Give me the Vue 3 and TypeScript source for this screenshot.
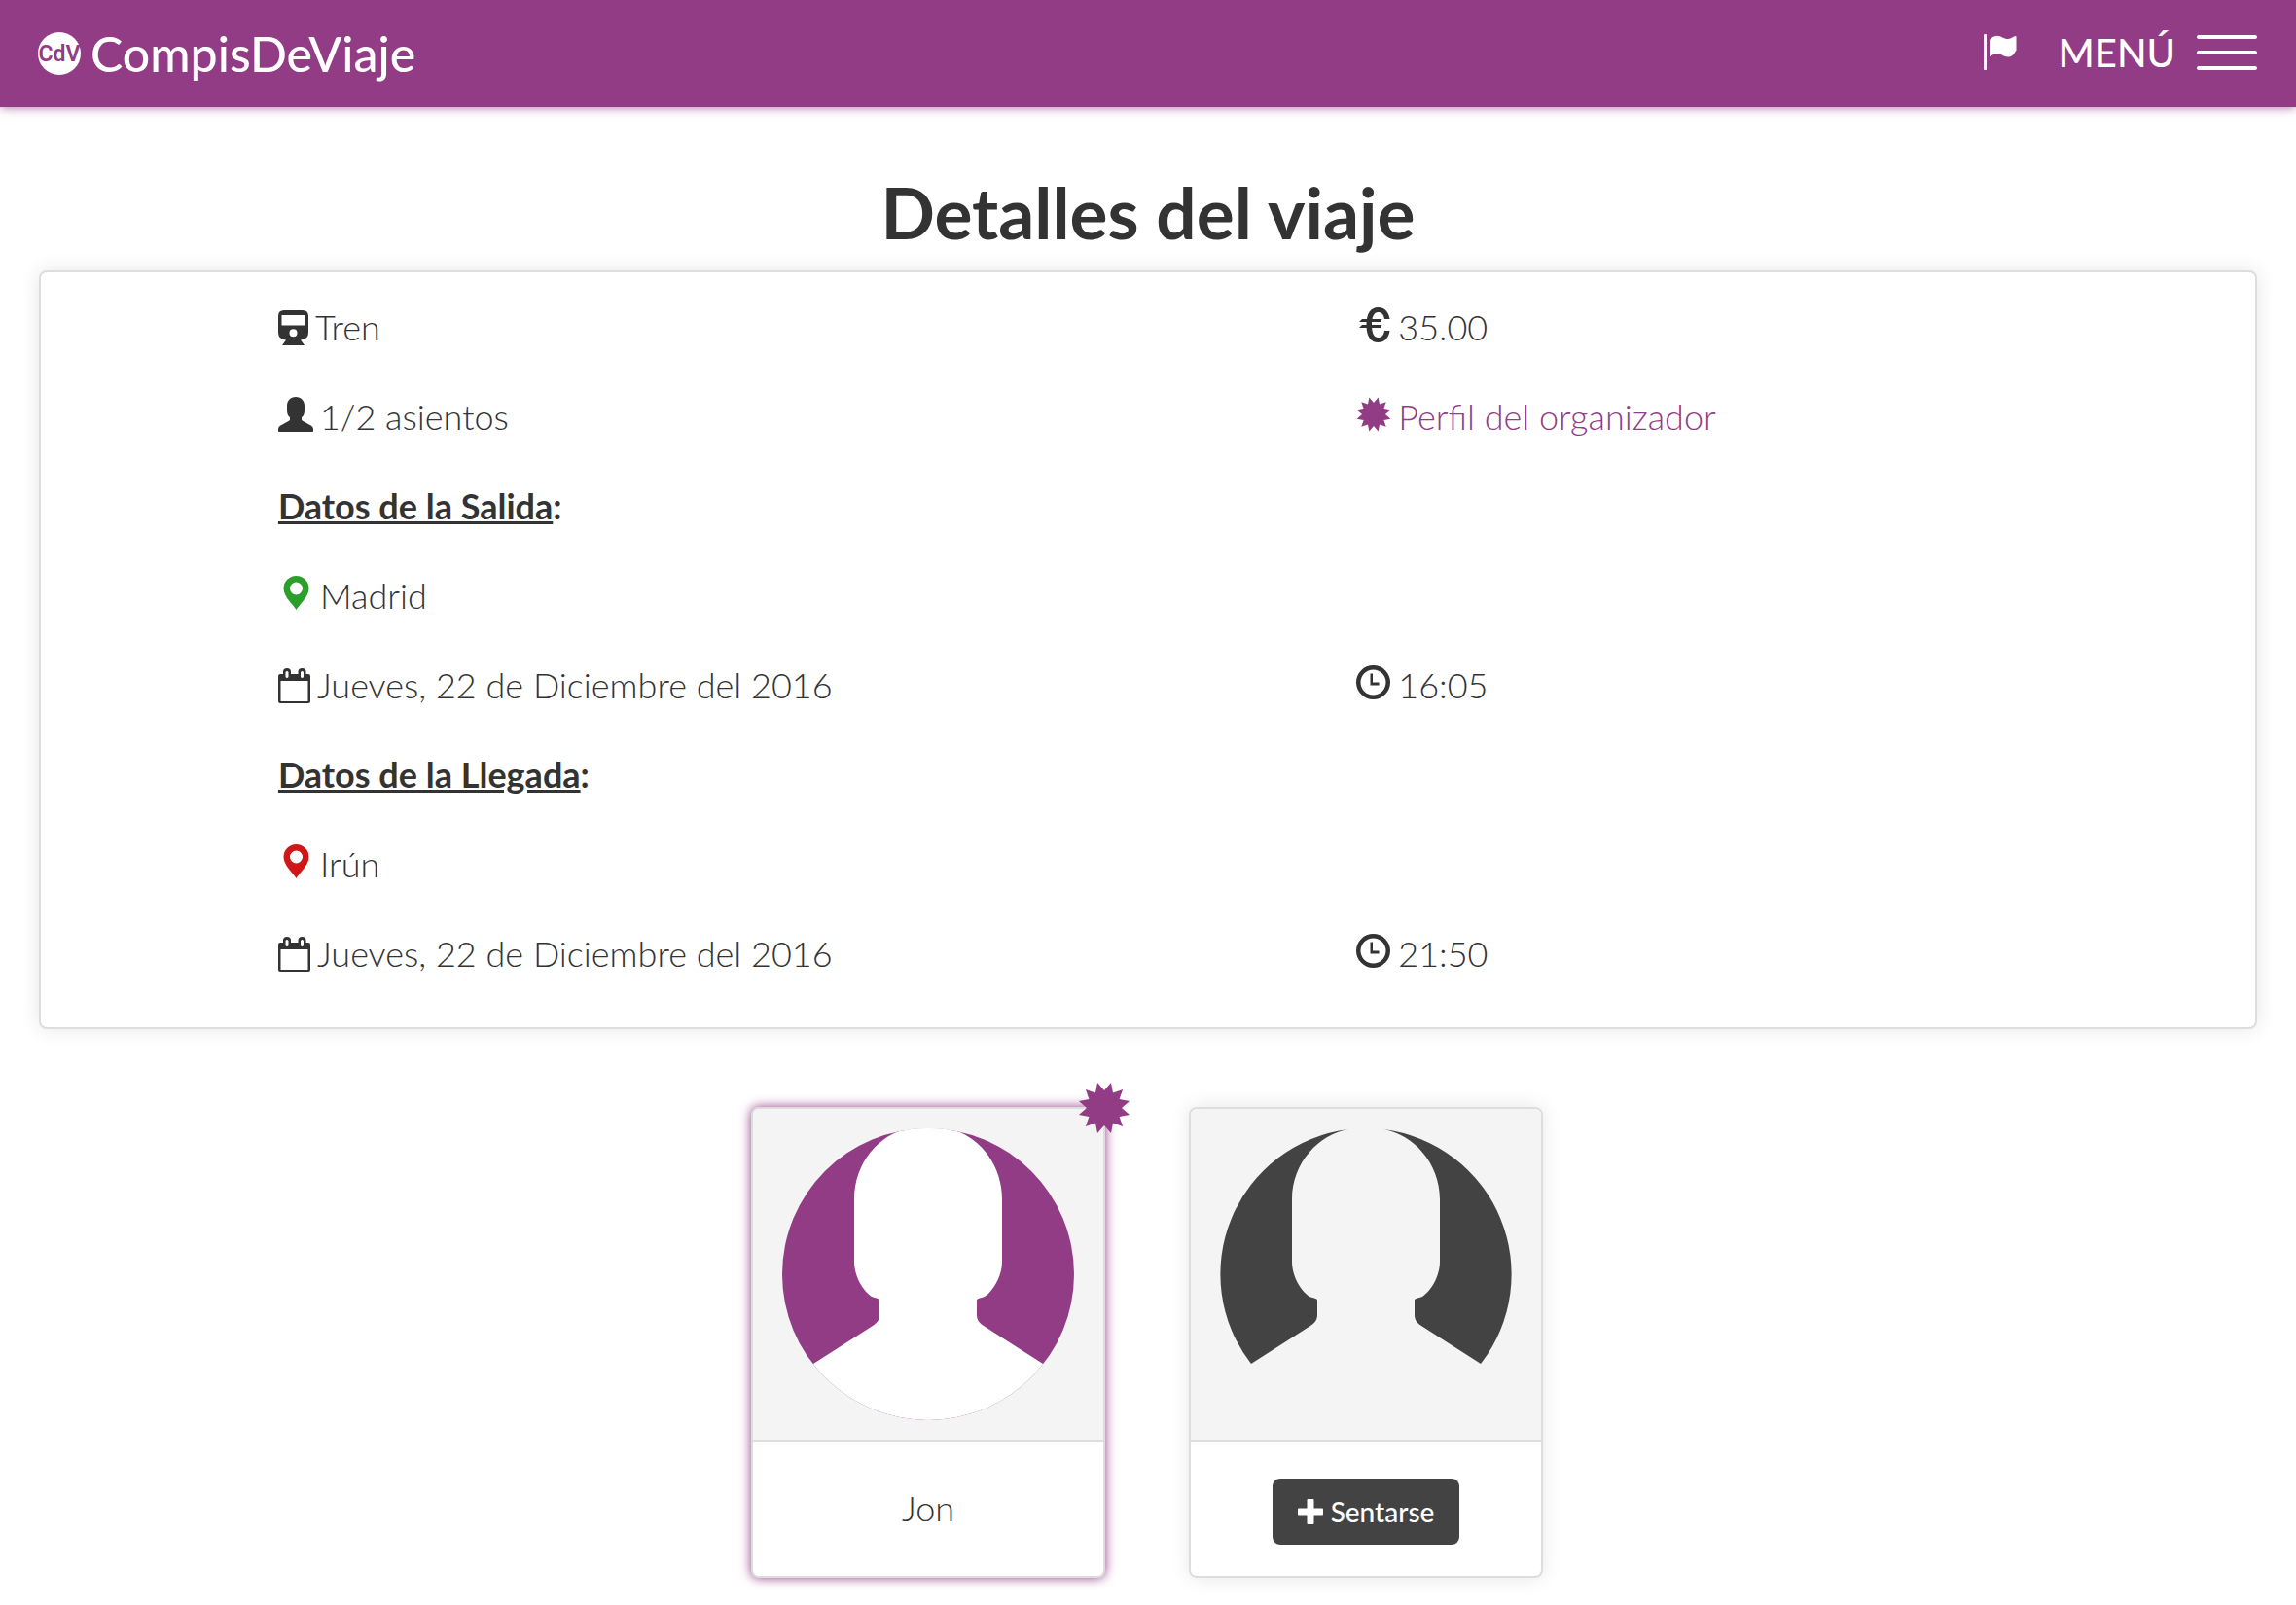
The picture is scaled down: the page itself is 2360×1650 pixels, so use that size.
<script setup lang="ts">
type IconName = 'train' | 'user' | 'euro' | 'certificate' | 'pin' | 'calendar' | 'clock'

interface Detail {
  icon: IconName
  text: string
  tone?: 'start' | 'end'
  href?: string
}

interface Row {
  heading?: string
  items: Detail[]
}

interface Seat {
  id: number
  name?: string
  organizer: boolean
}

const rows: Row[] = [
  { items: [{ icon: 'train', text: 'Tren' }, { icon: 'euro', text: '35.00' }] },
  {
    items: [
      { icon: 'user', text: '1/2 asientos' },
      { icon: 'certificate', text: 'Perfil del organizador', href: '#organizador' },
    ],
  },
  { heading: 'Datos de la Salida', items: [] },
  { items: [{ icon: 'pin', text: 'Madrid', tone: 'start' }] },
  {
    items: [
      { icon: 'calendar', text: 'Jueves, 22 de Diciembre del 2016' },
      { icon: 'clock', text: '16:05' },
    ],
  },
  { heading: 'Datos de la Llegada', items: [] },
  { items: [{ icon: 'pin', text: 'Irún', tone: 'end' }] },
  {
    items: [
      { icon: 'calendar', text: 'Jueves, 22 de Diciembre del 2016' },
      { icon: 'clock', text: '21:50' },
    ],
  },
]

const seats: Seat[] = [
  { id: 1, name: 'Jon', organizer: true },
  { id: 2, organizer: false },
]

// Each icon is 36 units high; only the train and the calendar are narrower.
const iconWidth = (name: IconName): number =>
  name === 'train' ? 31 : name === 'calendar' ? 33 : 36

const iconPaths: Record<IconName, string> = {
  train:
    'M6 0H25Q31 0 31 6V23Q31 30 23 30.500L27 36H4L8 30.500Q0 30 0 23V6Q0 0 6 0ZM3.500 5V15.500H27.500V5ZM15.500 19.300A4 4 0 1 0 15.500 27.300A4 4 0 1 0 15.500 19.300Z',
  user:
    'M18 0C23.500 0 27 4 27 9V14C27 17 26 20 24 21V23C24 24 24.500 24.500 25.500 25L34 29.800Q36 31 36 33V35Q36 36 35 36H1Q0 36 0 35V33Q0 31 2 29.800L10.500 25C11.500 24.500 12 24 12 23V21C10 20 9 17 9 14V9C9 4 12.500 0 18 0Z',
  euro:
    'M34.500 12H29C28.500 7.500 26 5 22.500 5C18.500 5 16 9 16 18S18.500 31 22.500 31C26 31 28.500 28.500 29 24H34.500C33.500 31.500 29 36 22.500 36C15 36 10.500 30 10.500 18S15 0 22.500 0C29 0 33.500 4.500 34.500 12ZM6 12V12H26.500L25 15H3ZM6 18H26.500L25 21H3Z',
  certificate: starPath(18, 18, 18, 12),
  pin:
    'M18.500 35C14.500 28.500 5.500 21.500 5.500 13A13 13 0 0 1 31.500 13C31.500 21.500 22.500 28.500 18.500 35ZM18.500 6.500A6.500 6.500 0 1 0 18.500 19.500A6.500 6.500 0 1 0 18.500 6.500Z',
  calendar:
    'M2 6H5V3.500A4 3.500 0 0 1 13 3.500V6H20.500V3.500A4 3.500 0 0 1 28.500 3.500V6H31Q33 6 33 8V34Q33 36 31 36H2Q0 36 0 34V8Q0 6 2 6ZM2.500 13V34H30.500V13ZM7.500 4V9Q9 11 10.500 9V4Q9 2 7.500 4ZM23 4V9Q24.500 11 26 9V4Q24.500 2 23 4Z',
  clock:
    'M17.500 0A17.500 17.500 0 1 1 17.500 35A17.500 17.500 0 1 1 17.500 0ZM17.500 4.500A13 13 0 1 0 17.500 30.500A13 13 0 1 0 17.500 4.500ZM14.500 8.500H17V17.500H23.500V20.500H14.500Z',
}

function starPath(cx: number, cy: number, outer: number, inner: number): string {
  const points: string[] = []
  for (let i = 0; i < 24; i++) {
    const radius = i % 2 === 0 ? inner : outer
    const angle = (i * Math.PI) / 12
    points.push(
      `${(cx + radius * Math.sin(angle)).toFixed(2)} ${(cy - radius * Math.cos(angle)).toFixed(2)}`,
    )
  }
  return `M${points.join('L')}Z`
}

const badgePath = starPath(27, 27, 27, 18)
</script>

<template>
  <header class="navbar">
    <a class="brand" href="#inicio">
      <svg class="logo" viewBox="0 0 44 44" aria-hidden="true">
        <circle cx="22" cy="22" r="22" fill="#fff" />
        <text x="22" y="30" text-anchor="middle" class="logo-text">CdV</text>
      </svg>
      <span>CompisDeViaje</span>
    </a>
    <nav class="nav-actions">
      <a class="flag" href="#avisos" aria-label="Avisos">
        <svg viewBox="0 0 36 38" aria-hidden="true">
          <rect x="1" y="0" width="3" height="37" rx="1" />
          <path d="M7 6Q10 2 14.500 1.700C19 1.700 21.500 5 26 5C29.500 5 31.500 2 34 2Q34.500 2 34.500 3V16.500C32 21 30 23.500 26 23.500C21.500 23.500 19 20 14.500 20C11 20 10 22 7.500 23Q7 23 7 22.500Z" />
        </svg>
      </a>
      <button class="menu" type="button">
        <span>MENÚ</span>
        <span class="bars" aria-hidden="true"><i></i><i></i><i></i></span>
      </button>
    </nav>
  </header>

  <main class="page">
    <h1>Detalles del viaje</h1>

    <section class="panel">
      <div v-for="(row, r) in rows" :key="r" class="row">
        <h2 v-if="row.heading"><u>{{ row.heading }}</u>:</h2>
        <component
          :is="item.href ? 'a' : 'p'"
          v-for="item in row.items"
          :key="item.text"
          :href="item.href"
          class="detail"
        >
          <svg
            class="icon"
            :class="[item.icon, item.tone]"
            :width="iconWidth(item.icon)"
            height="36"
            :viewBox="`0 0 ${iconWidth(item.icon)} 36`"
            aria-hidden="true"
          >
            <path :d="iconPaths[item.icon]" :fill-rule="item.icon === 'euro' ? 'nonzero' : 'evenodd'" />
          </svg>{{ item.text }}
        </component>
      </div>
    </section>

    <section class="seats">
      <article v-for="seat in seats" :key="seat.id" class="seat" :class="{ organizer: seat.organizer }">
        <div class="photo">
          <svg class="avatar" viewBox="0 0 300 300" aria-hidden="true">
            <path
              v-if="!seat.organizer"
              class="shade"
              d="M32 242A150 150 0 0 1 132 1C102 6 74 35 74 73V137C74 152 83 167 92 173C96 175 100 174 100 177V192C100 196 98 200 93 203ZM268 242A150 150 0 0 0 168 1C198 6 226 35 226 73V137C226 152 217 167 208 173C204 175 200 174 200 177V192C200 196 202 200 207 203Z"
            />
            <template v-else>
              <clipPath :id="`round-${seat.id}`"><circle cx="150" cy="150" r="150" /></clipPath>
              <circle class="shade" cx="150" cy="150" r="150" />
              <path
                fill="#fff"
                :clip-path="`url(#round-${seat.id})`"
                d="M74 73C74 35 100 6 130 0H170C200 6 226 35 226 73V137C226 152 217 167 208 173C204 175 200 174 200 177V192C200 196 202 200 207 203L268 242L300 262V300H0V262L32 242L93 203C98 200 100 196 100 192V177C100 174 96 175 92 173C83 167 74 152 74 137Z"
              />
              <path fill="#fff" d="M126 2Q138 0 150 0T174 2V6H126Z" />
            </template>
          </svg>
        </div>
        <p v-if="seat.name" class="name">{{ seat.name }}</p>
        <div v-else class="action">
          <button class="sit" type="button">
            <svg width="26" height="26" viewBox="0 0 26 26" aria-hidden="true">
              <path d="M10.500 0H15.500Q16.500 0 16.500 1V9.500H25Q26 9.500 26 10.500V15.500Q26 16.500 25 16.500H16.500V25Q16.500 26 15.500 26H10.500Q9.500 26 9.500 25V16.500H1Q0 16.500 0 15.500V10.500Q0 9.500 1 9.500H9.500V1Q9.500 0 10.500 0Z" />
            </svg>
            <span>Sentarse</span>
          </button>
        </div>
        <svg v-if="seat.organizer" class="badge" viewBox="0 0 54 54" aria-hidden="true">
          <path :d="badgePath" />
        </svg>
      </article>
    </section>
  </main>
</template>

<style>
body {
  margin: 0;
  background: #fff;
  color: #333;
  font-family: Lato, "Open Sans", sans-serif;
  font-size: 36px;
  font-weight: 300;
  line-height: 52px;
}
</style>

<style scoped>
.navbar {
  display: flex;
  align-items: center;
  justify-content: space-between;
  box-sizing: border-box;
  height: 110px;
  padding: 0 40px 0 39px;
  background: #933c86;
  box-shadow: 0 0 10px rgba(147, 60, 134, 0.8);
  color: #fff;
  font-weight: 500;
}
.brand {
  display: flex;
  align-items: center;
  gap: 10px;
  color: inherit;
  font-size: 50px;
  text-decoration: none;
}
.logo {
  width: 44px;
  height: 44px;
}
.logo-text {
  fill: #933c86;
  font-family: "Liberation Sans Narrow", Roboto, sans-serif;
  font-size: 23px;
  font-weight: 600;
}
.nav-actions {
  display: flex;
  align-items: center;
  gap: 42px;
  padding-bottom: 2px;
}
.flag svg {
  display: block;
  width: 36px;
  height: 38px;
  fill: #fff;
}
.menu {
  display: flex;
  align-items: center;
  gap: 22px;
  padding: 0;
  border: 0;
  background: none;
  color: inherit;
  font: inherit;
  font-size: 40px;
}
.bars {
  display: flex;
  flex-direction: column;
  gap: 12px;
}
.bars i {
  width: 62px;
  height: 4px;
  border-radius: 2px;
  background: #fff;
}
.page {
  padding: 0 40px 28px;
}
h1 {
  margin: 0;
  padding: 68px 0 20px;
  font-size: 73px;
  font-weight: 700;
  line-height: 80px;
  text-align: center;
}
.panel {
  display: flex;
  flex-direction: column;
  gap: 40px;
  padding: 30px 30px 50px;
  border: 2px solid #ddd;
  border-radius: 8px;
  background: #fff;
  box-shadow: 0 0 20px rgba(0, 0, 0, 0.1);
}
.row {
  display: grid;
  grid-template-columns: 6fr 5fr;
  margin-left: 8.3%;
}
h2,
.detail {
  height: 52px;
  margin: 0;
  padding-left: 30px;
  font-size: 36px;
  line-height: 52px;
}
h2 {
  font-weight: 700;
}
.detail {
  color: inherit;
  text-decoration: none;
}
a.detail {
  color: #933c86;
}
.icon {
  margin-right: 7px;
  fill: currentColor;
  vertical-align: -2px;
}
.icon.train,
.icon.calendar {
  vertical-align: -5px;
}
.icon.start {
  fill: #2a9f2a;
}
.icon.end {
  fill: #d01717;
}
.seats {
  display: flex;
  flex-wrap: wrap;
  justify-content: center;
  gap: 86px;
  padding: 80px 2px 0 0;
}
.seat {
  position: relative;
  width: 360px;
  border: 2px solid #ddd;
  border-radius: 8px;
  background: #fff;
  box-shadow: 0 0 20px rgba(0, 0, 0, 0.1);
  text-align: center;
}
.seat.organizer {
  box-shadow: 0 0 12px #933c86;
}
.photo {
  padding: 20px 30px;
  border-bottom: 2px solid #ddd;
  border-radius: 6px 6px 0 0;
  background: #f4f4f4;
}
.avatar {
  display: block;
  width: 100%;
}
.shade {
  fill: #434343;
}
.organizer .shade {
  fill: #933c86;
}
.name {
  margin: 0;
  padding: 42px 20px 44px;
}
.action {
  display: flex;
  justify-content: center;
  padding: 38px 20px 32px;
}
.sit {
  display: flex;
  align-items: center;
  gap: 8px;
  height: 68px;
  padding: 0 26px;
  border: 0;
  border-radius: 8px;
  background: #434343;
  color: #fff;
  font: inherit;
  font-size: 28px;
  font-weight: 500;
}
.sit svg {
  fill: #fff;
}
.badge {
  position: absolute;
  top: -28px;
  right: -28px;
  width: 54px;
  height: 54px;
  fill: #933c86;
}
</style>
